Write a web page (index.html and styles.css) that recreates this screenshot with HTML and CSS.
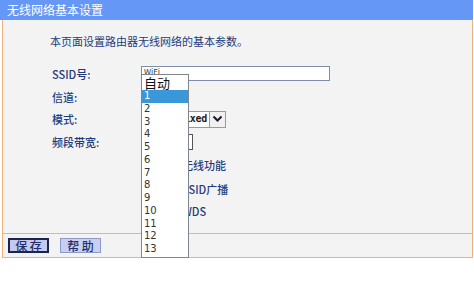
FILE: index.html
```html
<!DOCTYPE html>
<html lang="zh-CN">
<head>
<meta charset="utf-8">
<title>无线网络基本设置</title>
<link rel="stylesheet" href="styles.css">
</head>
<body>
<div class="page">
  <div class="header">无线网络基本设置</div>
  <div class="panel">
    <div class="content">
      <p class="intro">本页面设置路由器无线网络的基本参数。</p>
      <div class="form">
        <div class="label">SSID号:</div>
        <div class="ctl"><div class="input">WiFi</div></div>
        <div class="label">信道:</div>
        <div class="ctl"><div class="sel sel-ch"></div></div>
        <div class="label">模式:</div>
        <div class="ctl">
          <div class="sel sel-mode"><span class="sel-text">11bgn mixed</span><span class="arrow"><svg width="11" height="8" viewBox="0 0 11 8"><path d="M1.5 1.5 L5.5 5.5 L9.5 1.5" fill="none" stroke="#1a1a2a" stroke-width="2"/></svg></span></div>
        </div>
        <div class="label">频段带宽:</div>
        <div class="ctl"><div class="sel sel-bw"></div></div>
        <div class="label"></div>
        <div class="ctl chk"><span class="box"></span>开启无线功能</div>
        <div class="label"></div>
        <div class="ctl chk"><span class="box"></span>开启SSID广播</div>
        <div class="label"></div>
        <div class="ctl chk"><span class="box"></span>开启WDS</div>
      </div>
    </div>
    <div class="footer">
      <button class="btn btn-focus">保 存</button>
      <button class="btn">帮 助</button>
    </div>
  </div>
  <ul class="dropdown">
    <li class="auto">自动</li>
    <li class="on">1</li>
    <li>2</li>
    <li>3</li>
    <li>4</li>
    <li>5</li>
    <li>6</li>
    <li>7</li>
    <li>8</li>
    <li>9</li>
    <li>10</li>
    <li>11</li>
    <li>12</li>
    <li>13</li>
  </ul>
</div>
</body>
</html>
```
FILE: styles.css
```css
* { box-sizing: border-box; }
html, body { margin: 0; padding: 0; background: #ffffff; }
body {
  font-family: "Noto Sans CJK SC", "Noto Sans", sans-serif;
  width: 474px;
  height: 297px;
  overflow: hidden;
}
.page { position: relative; width: 474px; }
.header {
  width: 473px;
  height: 20px;
  background: #6597f6;
  color: #ffffff;
  font-size: 12px;
  line-height: 20px;
  padding-left: 7px;
}
.panel {
  margin-left: 2px;
  width: 471px;
  background: #f3f3f3;
  border-left: 1px solid #f0b27a;
  border-right: 1px solid #f0b27a;
  border-bottom: 1px solid #f0b27a;
}
.content {
  height: 213px;
  padding-top: 14px;
  padding-left: 47px;
}
.intro {
  margin: 0;
  font-size: 11px;
  line-height: 14px;
  color: #1f3b7c;
}
.form {
  margin-top: 14px;
  display: grid;
  grid-template-columns: 89px 1fr;
  grid-template-rows: 23px 23px 22px 23px 24px 23px 22px;
  padding-left: 2px;
  color: #1f3b7c;
  font-size: 11px;
}
.label, .ctl {
  display: flex;
  align-items: center;
  line-height: 14px;
}
.label { font-weight: 500; }
.input {
  width: 189px;
  height: 15px;
  border: 1px solid #7d8ca8;
  background: #ffffff;
  font-size: 8px;
  line-height: 10px;
  color: #333;
  padding-left: 2px;
  overflow: hidden;
}
.sel {
  height: 17px;
  border: 1px solid #9a9a9a;
  background: #ffffff;
}
.sel-ch { width: 44px; }
.sel-mode {
  width: 85px;
  display: flex;
  align-items: center;
  justify-content: flex-end;
  font-family: "DejaVu Sans Mono", monospace;
  font-size: 10px;
  color: #222;
  font-weight: bold;
}
.sel-text { margin-right: 2px; letter-spacing: -0.3px; }
.arrow {
  width: 16px;
  height: 15px;
  border-left: 1px solid #9a9a9a;
  background: #f0f0f0;
  display: flex;
  align-items: center;
  justify-content: center;
}
.sel-bw { width: 52px; height: 16px; border-color: #555; }
.chk { padding-left: 3px; font-weight: 500; }
.box {
  width: 13px;
  height: 13px;
  border: 1px solid #777;
  background: #fff;
  margin-right: 3px;
}
.footer {
  height: 24px;
  border-top: 1px solid #f0b27a;
  display: flex;
  align-items: center;
  gap: 11px;
  padding-left: 5px;
}
.btn {
  font-family: "Noto Sans CJK SC", sans-serif;
  height: 15px;
  width: 41px;
  padding: 0;
  font-size: 12px;
  line-height: 12px;
  color: #1d2f6e;
  background: #c9cff2;
  border: 1px solid #8c98c8;
  font-weight: 500;
}
.btn-focus {
  border: 2px solid #1b2450;
  background: #c3caee;
}
.dropdown {
  position: absolute;
  left: 141px;
  top: 74px;
  width: 48px;
  height: 184px;
  margin: 0;
  padding: 0;
  list-style: none;
  background: #ffffff;
  border: 1px solid #7f858f;
  font-family: "DejaVu Sans", sans-serif;
  font-size: 10px;
  color: #333;
}
.dropdown li {
  height: 12.75px;
  line-height: 12.75px;
  padding-left: 2px;
}
.dropdown li.auto {
  height: 15px;
  line-height: 15px;
  font-family: "Noto Sans CJK SC", sans-serif;
  font-size: 13px;
  color: #111;
}
.dropdown li.on {
  background: #3a98da;
  color: #ffffff;
}
```
